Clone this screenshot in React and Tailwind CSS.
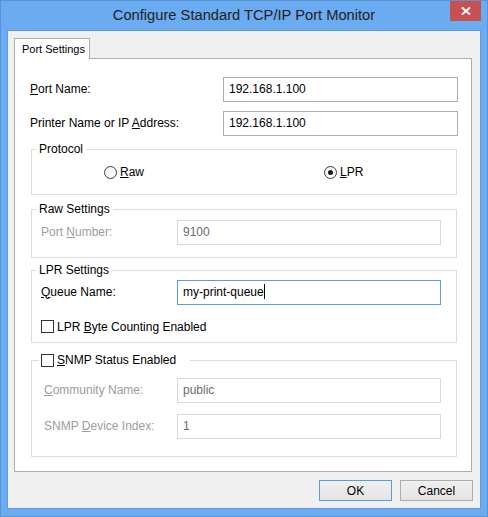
import React from "react";

function Radio({ checked }) {
  return (
    <span className="w-[13px] h-[13px] rounded-full border border-[#3c3c3c] bg-gradient-to-b from-[#f4f4f4] to-[#ffffff] flex items-center justify-center shrink-0">
      {checked && <span className="w-[5px] h-[5px] rounded-full bg-[#1a1a1a]"></span>}
    </span>
  );
}

function Check() {
  return <span className="w-[13px] h-[13px] border border-[#333333] bg-white shrink-0"></span>;
}

function Field({ value, disabled, focused, caret, width = "w-[264px]" }) {
  const border = focused
    ? "border-[#569de5]"
    : disabled
    ? "border-[#d9d9d9]"
    : "border-[#abadb3]";
  return (
    <div
      className={
        width +
        " h-[25px] border bg-white flex items-center pl-[5px] pb-[2px] " +
        border +
        (disabled ? " text-[#6d6d6d]" : " text-black")
      }
    >
      <span>{value}</span>
      {caret && <span className="w-px h-[15px] bg-black"></span>}
    </div>
  );
}

export default function App() {
  return (
    <div className="w-[488px] h-[517px] bg-[#6aabf1] border border-[#5a92d6] flex flex-col font-['Liberation_Sans',Arial,sans-serif] text-[12px] leading-[14px] select-none">
      {/* title bar */}
      <div className="h-[29px] grid grid-cols-[1fr_auto_1fr] items-center">
        <div></div>
        <div className="text-[14.7px] text-[#222222] pb-[1px]">Configure Standard TCP/IP Port Monitor</div>
        <div className="justify-self-end self-start mr-[6px] w-[31px] h-[20px] bg-[#c75050] flex items-center justify-center">
          <svg width="10" height="8" viewBox="0 0 10 8">
            <path d="M1 0.5 L9 7.5 M9 0.5 L1 7.5" stroke="white" strokeWidth="2" fill="none" />
          </svg>
        </div>
      </div>

      {/* client area */}
      <div className="mx-[6px] w-[474px] h-[479px] border border-[#5d9be3] bg-[#f0f0f0] flex flex-col pl-[6px] pt-[7px]">
        <div className="relative z-10 -mb-px w-[76px] h-[21px] bg-white border-t border-x border-[#adadad] pl-[7px] pt-[3px] text-[11px] text-black">
          Port Settings
        </div>

        <div className="w-[458px] h-[414px] bg-white border border-[#adadad] pl-[15px] pt-[18px] pb-[15px] flex flex-col">
          <div className="flex items-center h-[25px]">
            <div className="w-[193px] pb-[2px]">
              <u>P</u>ort Name:
            </div>
            <Field value="192.168.1.100" width="w-[235px]" />
          </div>
          <div className="flex items-center h-[25px] mt-[9px]">
            <div className="w-[193px] pb-[2px]">
              Printer Name or IP <u>A</u>ddress:
            </div>
            <Field value="192.168.1.100" width="w-[235px]" />
          </div>

          {/* Protocol */}
          <fieldset className="ml-px mt-[6px] w-[426px] border border-[#dcdcdc]">
            <legend className="ml-[4px] px-[3px] leading-[14px] text-black">Protocol</legend>
            <div className="pt-[9px] pb-[15px] pl-[72px] flex items-center">
              <div className="w-[220px] flex items-center gap-[3px]">
                <Radio />
                <span>
                  <u>R</u>aw
                </span>
              </div>
              <div className="flex items-center gap-[3px]">
                <Radio checked />
                <span>
                  <u>L</u>PR
                </span>
              </div>
            </div>
          </fieldset>

          {/* Raw Settings */}
          <fieldset className="ml-px mt-[7px] w-[426px] border border-[#dcdcdc]">
            <legend className="ml-[4px] px-[3px] leading-[14px] text-black">Raw Settings</legend>
            <div className="pt-[4px] pb-[12px] pl-[9px] flex items-center">
              <div className="w-[136px] pb-[2px] text-[#9d9d9d]">
                Port <u>N</u>umber:
              </div>
              <Field value="9100" disabled />
            </div>
          </fieldset>

          {/* LPR Settings */}
          <fieldset className="ml-px mt-[5px] w-[426px] border border-[#dcdcdc]">
            <legend className="ml-[4px] px-[3px] leading-[14px] text-black">LPR Settings</legend>
            <div className="pt-[3px] pb-[9px] pl-[9px] flex flex-col">
              <div className="flex items-center">
                <div className="w-[136px] pb-[2px]">
                  <u>Q</u>ueue Name:
                </div>
                <Field value="my-print-queue" focused caret />
              </div>
              <div className="mt-[15px] flex items-center gap-[3px] h-[13px]">
                <Check />
                <span>
                  LPR <u>B</u>yte Counting Enabled
                </span>
              </div>
            </div>
          </fieldset>

          {/* SNMP */}
          <fieldset className="ml-px mt-[10px] w-[426px] border border-[#dcdcdc]">
            <legend className="ml-[7px] pl-[2px] w-[151px] h-[14px] flex items-center gap-[3px] text-black">
              <Check />
              <span>
                <u>S</u>NMP Status Enabled
              </span>
            </legend>
            <div className="pt-[11px] pb-[17px] pl-[12px] flex flex-col gap-[11px]">
              <div className="flex items-center">
                <div className="w-[133px] pb-[2px] text-[#9d9d9d]">
                  <u>C</u>ommunity Name:
                </div>
                <Field value="public" disabled />
              </div>
              <div className="flex items-center">
                <div className="w-[133px] pb-[2px] text-[#9d9d9d]">
                  SNMP <u>D</u>evice Index:
                </div>
                <Field value="1" disabled />
              </div>
            </div>
          </fieldset>
        </div>

        {/* buttons */}
        <div className="mt-[8px] pr-[7px] flex justify-end gap-[8px]">
          <button className="w-[73px] h-[21px] border border-[#569de5] bg-gradient-to-b from-[#f0f0f0] to-[#e5e5e5] text-black leading-[14px]">
            OK
          </button>
          <button className="w-[73px] h-[21px] border border-[#adadad] bg-gradient-to-b from-[#f0f0f0] to-[#e5e5e5] text-black leading-[14px]">
            Cancel
          </button>
        </div>
      </div>
    </div>
  );
}
